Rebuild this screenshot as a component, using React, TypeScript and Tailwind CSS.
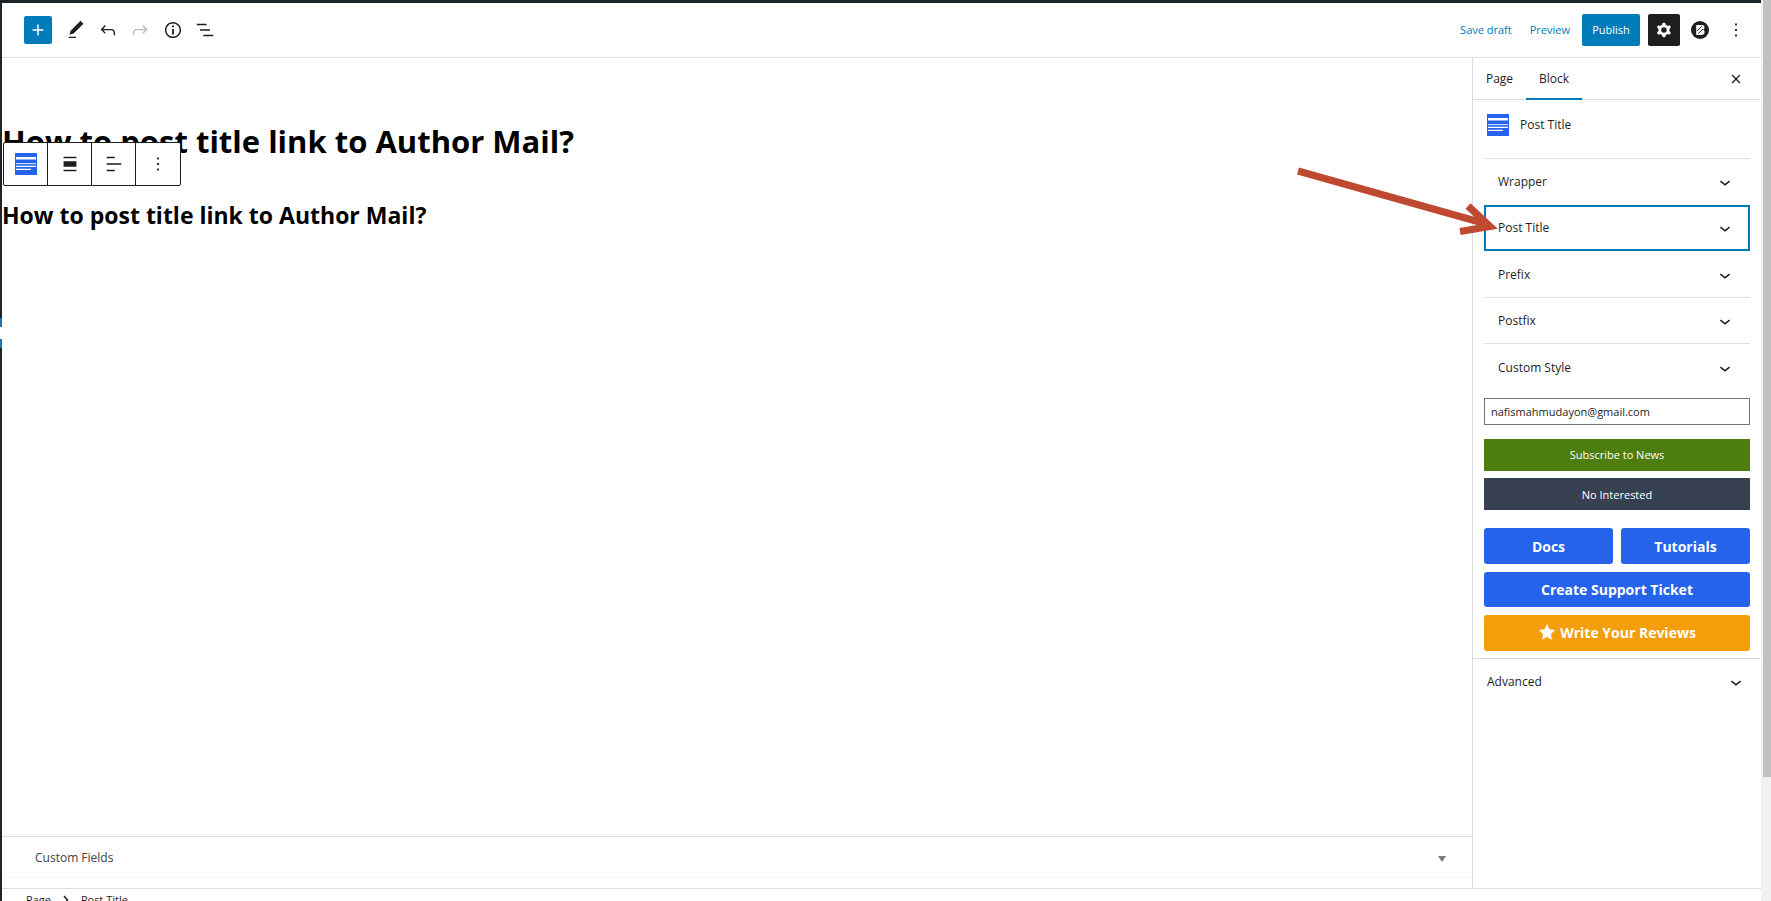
import type { ReactNode } from "react";

const paths = {
  plus: "M18 11.2h-5.2V6h-1.6v5.2H6v1.6h5.2V18h1.6v-5.2H18z",
  edit: "M20.1 5.1L16.9 2 6.2 12.7l-1.3 4.4 4.5-1.3L20.1 5.1zM4 20.8h8v-1.5H4v1.5z",
  undo: "M18.3 11.7c-.6-.6-1.4-.9-2.3-.9H6.7l2.9-3.3-1.1-1-4.5 5L8.5 16l1-1-2.7-2.7H16c.5 0 .9.2 1.3.5 1 1 1 3.4 1 4.5v.3h1.5v-.2c0-1.5 0-4.3-1.5-5.7z",
  redo: "M15.6 6.5l-1.1 1 2.9 3.3H8c-.9 0-1.7.3-2.3.9-1.4 1.5-1.4 4.2-1.4 5.6v.2h1.5v-.3c0-1.1 0-3.5 1-4.5.3-.3.7-.5 1.3-.5h9.2L14.5 15l1.1 1.1 4.6-4.6-4.6-5z",
  info: "M12 3.2c-4.8 0-8.8 3.9-8.8 8.8 0 4.8 3.9 8.8 8.8 8.8 4.8 0 8.8-3.9 8.8-8.8 0-4.8-4-8.8-8.8-8.8zm0 16c-4 0-7.2-3.3-7.2-7.2C4.8 8 8 4.8 12 4.8s7.2 3.3 7.2 7.2c0 4-3.2 7.2-7.2 7.2zM11 17h2v-6h-2v6zm0-8h2V7h-2v2z",
  list: "M13.8 5.2H3v1.5h10.8V5.2zm-3.6 12v1.5H21v-1.5H10.2zm7.2-6H6.6v1.5h10.8v-1.5z",
  cog: "M10.289 4.836A1 1 0 0111.275 4h1.306a1 1 0 01.987.836l.244 1.466c.787.26 1.503.679 2.108 1.218l1.393-.522a1 1 0 011.216.437l.653 1.13a1 1 0 01-.23 1.273l-1.148.944a6.025 6.025 0 010 2.435l1.149.946a1 1 0 01.23 1.272l-.653 1.13a1 1 0 01-1.216.437l-1.394-.522c-.605.54-1.32.958-2.108 1.218l-.244 1.466a1 1 0 01-.987.836h-1.306a1 1 0 01-.986-.836l-.244-1.466a5.995 5.995 0 01-2.108-1.218l-1.394.522a1 1 0 01-1.217-.436l-.653-1.131a1 1 0 01.23-1.272l1.149-.946a6.026 6.026 0 010-2.435l-1.148-.944a1 1 0 01-.23-1.272l.653-1.131a1 1 0 011.217-.437l1.393.522a5.994 5.994 0 012.108-1.218l.244-1.466zM14.929 12a3 3 0 11-6 0 3 3 0 016 0z",
  close: "M12 13.06l3.712 3.713 1.061-1.06L13.061 12l3.712-3.712-1.06-1.06L12 10.938 8.288 7.227l-1.061 1.06L10.939 12l-3.712 3.712 1.06 1.061L12 13.061z",
  chevron: "M17.5 11.6L12 16l-5.5-4.4.9-1.2L12 14l4.5-3.6 1 1.2z",
  more: "M13 19h-2v-2h2v2zm0-6h-2v-2h2v2zm0-6h-2V5h2v2z",
  alignNone: "M5 15h14V9H5v6zm0 4.8h14v-1.5H5v1.5zM5 4.2v1.5h14V4.2H5z",
  alignLeft: "M4 19.8h8.9v-1.5H4v1.5zm8.9-15.6H4v1.5h8.9V4.2zm-8.9 7v1.5h16v-1.5H4z",
};

function Icon({ name }: { name: keyof typeof paths }) {
  return (
    <svg viewBox="0 0 24 24" className="size-[22px] shrink-0 fill-current" fillRule="evenodd" aria-hidden="true">
      <path d={paths[name]} />
    </svg>
  );
}

function PostTitleIcon() {
  return (
    <svg viewBox="0 0 22 22" className="size-[22px] shrink-0" aria-hidden="true">
      <path fill="#2563eb" d="M0 0h22v22H0z" />
      <path fill="#fff" d="M1 4h20v2.4H1zM1 12.8h20v1.2H1zM1 15.8h15v1.2H1z" />
      <path fill="#fff" opacity="0.75" d="M1 10h20v1.2H1z" />
    </svg>
  );
}

function BlockBadgeIcon() {
  return (
    <svg viewBox="0 0 18 18" className="size-[18px]" aria-hidden="true">
      <circle cx="9" cy="9" r="9" fill="#1e1e1e" />
      <path fill="#fff" d="M5.2 4h5.6c1.700 0 2.700.9 2.700 2.300 0 1.100-.5 1.900-1.400 2.400 1 .4 1.500 1.200 1.500 2.300 0 1.900-1.200 3-3.100 3H5.200z" />
      <path fill="none" stroke="#1e1e1e" strokeWidth="1" d="M6.300 9.800L11 5.200M7.200 12.600L12 8" />
    </svg>
  );
}

function IconButton({ name, className = "" }: { name: keyof typeof paths; className?: string }) {
  return (
    <button aria-label={name} className={`flex h-8 w-8 items-center justify-center ${className}`}>
      <Icon name={name} />
    </button>
  );
}

function PanelRow({ label, className }: { label: string; className: string }) {
  return (
    <button className={`flex items-center justify-between px-[14px] text-left ${className}`}>
      <span>{label}</span>
      <Icon name="chevron" />
    </button>
  );
}

function ToolCell({ label, children }: { label: string; children: ReactNode }) {
  return (
    <button aria-label={label} className="flex w-11 items-center justify-center border-r border-[#1e1e1e] last:border-r-0">
      {children}
    </button>
  );
}

export default function App() {
  return (
    <div className="flex h-screen overflow-hidden bg-white font-['Open_Sans','Noto_Sans',sans-serif] text-[12px] leading-4 text-[#1e1e1e]">
      <div className="flex w-[2px] shrink-0 flex-col bg-[#1d2327]">
        <div className="h-[318px]" />
        <div className="h-[9px] bg-[#2271b1]" />
        <div className="h-[12px] bg-white" />
        <div className="h-[9px] bg-[#2271b1]" />
      </div>

      <div className="flex min-w-0 flex-1 flex-col border-t-[3px] border-[#1d2327]">
        <header className="flex h-[55px] shrink-0 items-center justify-between border-b border-[#e0e0e0] pr-[9px] pl-[22px]">
          <div className="flex items-center">
            <button aria-label="Add block" className="mr-2 flex size-7 items-center justify-center rounded-[2px] bg-[#007cba] text-white">
              <Icon name="plus" />
            </button>
            <IconButton name="edit" />
            <IconButton name="undo" />
            <IconButton name="redo" className="mr-px text-[#bbbbbb]" />
            <IconButton name="info" />
            <IconButton name="list" />
          </div>
          <div className="flex items-center">
            <button className="mr-[18px] text-[11px] text-[#007cba]">Save draft</button>
            <button className="mr-3 text-[11px] text-[#007cba]">Preview</button>
            <button className="mr-2 h-8 w-[58px] rounded-[2px] bg-[#007cba] text-[11px] text-white">Publish</button>
            <IconButton name="cog" className="rounded-[2px] bg-[#1e1e1e] text-white" />
            <button aria-label="Blocks" className="mx-1 flex size-8 items-center justify-center">
              <BlockBadgeIcon />
            </button>
            <IconButton name="more" />
          </div>
        </header>

        <div className="flex min-h-0 flex-1">
          <main className="flex min-w-0 flex-1 flex-col">
            <div className="relative flex-1 font-bold text-black">
              <h1 className="pt-[61px] text-[31px] leading-[44px]">How to post title link to Author Mail?</h1>
              <h2 className="pt-[35px] text-[23px] leading-[34px]">How to post title link to Author Mail?</h2>
              <div className="absolute top-[84px] left-px flex h-11 rounded-[2px] border border-[#1e1e1e] bg-white text-[#1e1e1e]">
                <ToolCell label="Post Title"><PostTitleIcon /></ToolCell>
                <ToolCell label="Align"><Icon name="alignNone" /></ToolCell>
                <ToolCell label="Text align"><Icon name="alignLeft" /></ToolCell>
                <ToolCell label="Options"><Icon name="more" /></ToolCell>
              </div>
            </div>
            <button className="flex h-[41px] items-center justify-between border-t border-[#dddddd] pt-px pr-[26px] pl-[33px] text-[#3c434a]">
              <span>Custom Fields</span>
              <svg viewBox="0 0 8 8" className="size-2 fill-[#787c82]" aria-hidden="true"><path d="M0 2h8L4 8z" /></svg>
            </button>
            <div className="h-[11px] border-t border-[#f5f5f5]" />
          </main>

          <aside className="flex w-[289px] shrink-0 flex-col border-l border-[#dddddd]">
            <div className="flex h-[42px] shrink-0 items-stretch border-b border-[#dddddd] pr-[9px]">
              <button className="w-[53px]">Page</button>
              <button className="-mb-px w-14 border-b-2 border-[#007cba] pt-px">Block</button>
              <IconButton name="close" className="ml-auto self-center" />
            </div>
            <div className="flex h-[58px] shrink-0 items-start gap-[11px] px-[14px] pt-[14px]">
              <PostTitleIcon />
              <span className="leading-[22px]">Post Title</span>
            </div>
            <div className="flex flex-col px-[11px]">
              <PanelRow label="Wrapper" className="h-[47px] border-t border-[#e0e0e0]" />
              <PanelRow label="Post Title" className="h-[46px] outline-2 -outline-offset-2 outline-[#007cba]" />
              <PanelRow label="Prefix" className="h-[46px] border-t border-transparent" />
              <PanelRow label="Postfix" className="h-[46px] border-t border-[#e0e0e0]" />
              <PanelRow label="Custom Style" className="h-[48px] border-t border-[#e0e0e0]" />
              <input
                aria-label="Email"
                type="email"
                defaultValue="nafismahmudayon@gmail.com"
                className="mt-[7px] h-[27px] border border-[#757575] px-[6px] text-[11px]"
              />
              <button className="mt-[14px] h-8 bg-[#4d7c0f] text-[11px] text-white">Subscribe to News</button>
              <button className="mt-[7px] h-8 bg-[#374151] pt-px text-[11px] text-white">No Interested</button>
              <div className="mt-[18px] grid grid-cols-2 gap-2 text-[14px] font-bold text-white">
                <a href="#docs" className="flex h-9 items-center justify-center rounded-[3px] bg-[#2563eb] pt-px">Docs</a>
                <a href="#tutorials" className="flex h-9 items-center justify-center rounded-[3px] bg-[#2563eb] pt-px">Tutorials</a>
                <a href="#support" className="col-span-2 flex h-[35px] items-center justify-center rounded-[3px] bg-[#2563eb]">Create Support Ticket</a>
                <a href="#reviews" className="col-span-2 flex h-9 items-center justify-center gap-1 rounded-[3px] bg-[#f59e0b]">
                  <svg viewBox="0 0 24 24" className="size-[18px] fill-white" aria-hidden="true">
                    <path d="M12 0l3.300 7 7.500 1-5.500 5.300 1.400 7.700L12 17.300 5.300 21l1.400-7.700L1.200 8l7.500-1z" />
                  </svg>
                  <span>Write Your Reviews</span>
                </a>
              </div>
            </div>
            <button className="mt-[7px] flex h-[47px] items-center justify-between border-t border-[#dddddd] px-[14px] text-left">
              <span>Advanced</span>
              <Icon name="chevron" />
            </button>
          </aside>
        </div>

        <footer className="h-[13px] shrink-0 overflow-hidden border-t border-[#dddddd]">
          <nav aria-label="Breadcrumb" className="flex items-center gap-3 pt-[3px] pl-6 text-[11px]">
            <button>Page</button>
            <svg viewBox="0 0 6 10" className="h-[10px] w-[6px] fill-none stroke-[#1e1e1e] stroke-[1.5]" aria-hidden="true"><path d="M1 1l3.500 4L1 9" /></svg>
            <button>Post Title</button>
          </nav>
        </footer>
      </div>

      <div className="w-[10px] shrink-0 bg-[#f1f1f1] pl-[2px]">
        <div className="h-[777px] bg-[#c1c1c1]" />
      </div>

      <svg viewBox="0 0 204 72" className="pointer-events-none absolute top-[164px] right-[272px] h-[72px] w-[204px]" aria-hidden="true">
        <g fill="none" stroke="#bf4a31" strokeWidth="7.200">
          <path d="M3 7l185 52" />
          <path d="M173 42l22 20.500-30 5" />
        </g>
      </svg>
    </div>
  );
}
